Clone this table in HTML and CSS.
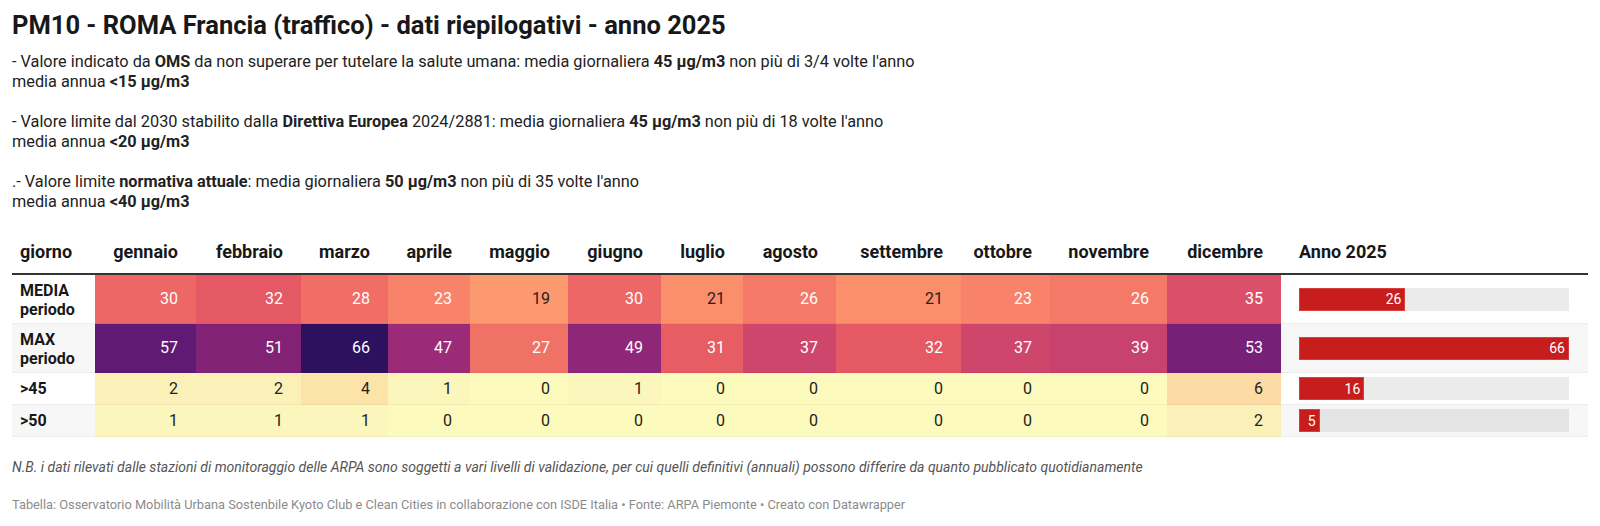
FILE: index.html
```html
<!DOCTYPE html>
<html lang="it">
<head>
<meta charset="utf-8">
<title>PM10 - ROMA Francia (traffico)</title>
<link rel="stylesheet" href="styles.css">
</head>
<body>
<div class="chart">
  <h1 class="title">PM10 - ROMA Francia (traffico) - dati riepilogativi - anno 2025</h1>
  <p class="desc">- Valore indicato da <b>OMS</b> da non superare per tutelare la salute umana: media giornaliera <b>45 µg/m3</b> non più di 3/4 volte l'anno<br>media annua <b>&lt;15 µg/m3</b><br><br>- Valore limite dal 2030 stabilito dalla <b>Direttiva Europea</b> 2024/2881: media giornaliera <b>45 µg/m3</b> non più di 18 volte l'anno<br>media annua <b>&lt;20 µg/m3</b><br><br>.- Valore limite <b>normativa attuale</b>: media giornaliera <b>50 µg/m3</b> non più di 35 volte l'anno<br>media annua <b>&lt;40 µg/m3</b></p>

  <table class="tbl">
    <colgroup>
      <col class="w-lab"><col class="w-gen"><col class="w-feb"><col class="w-mar"><col class="w-apr"><col class="w-mag"><col class="w-giu"><col class="w-lug"><col class="w-ago"><col class="w-set"><col class="w-ott"><col class="w-nov"><col class="w-dic"><col class="w-bar">
    </colgroup>
    <thead>
      <tr>
        <th class="lab">giorno</th>
        <th>gennaio</th><th>febbraio</th><th>marzo</th><th>aprile</th><th>maggio</th><th>giugno</th><th>luglio</th><th>agosto</th><th>settembre</th><th>ottobre</th><th>novembre</th><th>dicembre</th>
        <th class="barh">Anno 2025</th>
      </tr>
    </thead>
    <tbody>
      <tr class="two">
        <td class="lab">MEDIA<br>periodo</td>
        <td class="lt" style="background:#ec6766">30</td>
        <td class="lt" style="background:#e55964">32</td>
        <td class="lt" style="background:#f06e65">28</td>
        <td class="lt" style="background:#f8836a">23</td>
        <td class="dk" style="background:#fc996e">19</td>
        <td class="lt" style="background:#ec6766">30</td>
        <td class="dk" style="background:#fb8e6b">21</td>
        <td class="lt" style="background:#f47a67">26</td>
        <td class="dk" style="background:#fb8e6b">21</td>
        <td class="lt" style="background:#f8836a">23</td>
        <td class="lt" style="background:#f47a67">26</td>
        <td class="lt" style="background:#dc4f6a">35</td>
        <td class="barc"><div class="track"><div class="fill" style="width:39.4%"><span>26</span></div></div></td>
      </tr>
      <tr class="two alt">
        <td class="lab">MAX<br>periodo</td>
        <td class="lt" style="background:#5f1a73">57</td>
        <td class="lt" style="background:#822275">51</td>
        <td class="lt" style="background:#2d115f">66</td>
        <td class="lt" style="background:#9b2b78">47</td>
        <td class="lt" style="background:#f07266">27</td>
        <td class="lt" style="background:#8f2779">49</td>
        <td class="lt" style="background:#e65d64">31</td>
        <td class="lt" style="background:#cf466c">37</td>
        <td class="lt" style="background:#e45964">32</td>
        <td class="lt" style="background:#cf466c">37</td>
        <td class="lt" style="background:#c7426f">39</td>
        <td class="lt" style="background:#762078">53</td>
        <td class="barc"><div class="track"><div class="fill" style="width:100%"><span>66</span></div></div></td>
      </tr>
      <tr class="one">
        <td class="lab">&gt;45</td>
        <td class="dk" style="background:#fbf1b8">2</td>
        <td class="dk" style="background:#fbf1b8">2</td>
        <td class="dk" style="background:#fce4a8">4</td>
        <td class="dk" style="background:#fbf6bb">1</td>
        <td class="dk" style="background:#fcfabd">0</td>
        <td class="dk" style="background:#fbf6bb">1</td>
        <td class="dk" style="background:#fcfabd">0</td>
        <td class="dk" style="background:#fcfabd">0</td>
        <td class="dk" style="background:#fcfabd">0</td>
        <td class="dk" style="background:#fcfabd">0</td>
        <td class="dk" style="background:#fcfabd">0</td>
        <td class="dk" style="background:#fcdca4">6</td>
        <td class="barc"><div class="track"><div class="fill" style="width:24.2%"><span>16</span></div></div></td>
      </tr>
      <tr class="one alt">
        <td class="lab">&gt;50</td>
        <td class="dk" style="background:#fbf6bb">1</td>
        <td class="dk" style="background:#fbf6bb">1</td>
        <td class="dk" style="background:#fbf6bb">1</td>
        <td class="dk" style="background:#fcfabd">0</td>
        <td class="dk" style="background:#fcfabd">0</td>
        <td class="dk" style="background:#fcfabd">0</td>
        <td class="dk" style="background:#fcfabd">0</td>
        <td class="dk" style="background:#fcfabd">0</td>
        <td class="dk" style="background:#fcfabd">0</td>
        <td class="dk" style="background:#fcfabd">0</td>
        <td class="dk" style="background:#fcfabd">0</td>
        <td class="dk" style="background:#fbf1b8">2</td>
        <td class="barc"><div class="track"><div class="fill" style="width:7.6%"><span>5</span></div></div></td>
      </tr>
    </tbody>
  </table>

  <p class="note">N.B. i dati rilevati dalle stazioni di monitoraggio delle ARPA sono soggetti a vari livelli di validazione, per cui quelli definitivi (annuali) possono differire da quanto pubblicato quotidianamente</p>
  <p class="foot">Tabella: Osservatorio Mobilità Urbana Sostenbile Kyoto Club e Clean Cities in collaborazione con ISDE Italia • Fonte: ARPA Piemonte • Creato con Datawrapper</p>
</div>
</body>
</html>
```

FILE: styles.css
```css
html, body {
  margin: 0;
  padding: 0;
  background: #ffffff;
}

body {
  font-family: Roboto, "Liberation Sans", Arial, sans-serif;
  color: #181818;
}

.chart {
  padding: 10px 12px 0 12px;
}

.title {
  margin: 0;
  font-size: 25.5px;
  line-height: 30px;
  font-weight: 700;
  color: #181818;
}

.desc {
  margin: 12px 0 0 0;
  font-size: 16.3px;
  line-height: 20px;
  color: #222222;
}

.desc b {
  font-weight: 700;
}

.tbl {
  margin-top: 20px;
  width: 1576px;
  border-collapse: collapse;
  table-layout: fixed;
}

.w-lab { width: 83px; }
.w-gen { width: 101px; }
.w-feb { width: 105px; }
.w-mar { width: 87px; }
.w-apr { width: 82px; }
.w-mag { width: 98px; }
.w-giu { width: 93px; }
.w-lug { width: 82px; }
.w-ago { width: 93px; }
.w-set { width: 125px; }
.w-ott { width: 89px; }
.w-nov { width: 117px; }
.w-dic { width: 114px; }
.w-bar { width: 307px; }

.tbl th {
  font-size: 18px;
  font-weight: 700;
  line-height: 22px;
  padding: 9px 18px 10px 0;
  text-align: right;
  border-bottom: 2px solid #333333;
  white-space: nowrap;
  color: #181818;
}

.tbl th.lab {
  text-align: left;
  padding-left: 8px;
}

.tbl th.barh {
  text-align: left;
  padding-left: 18px;
}

.tbl td {
  font-size: 16px;
  line-height: 18px;
  text-align: right;
  padding: 7px 18px 6px 0;
  border-bottom: 1px solid rgba(0, 0, 0, 0.04);
  vertical-align: middle;
}

.tbl tr.two td {
  padding-top: 6px;
  padding-bottom: 6px;
}

.tbl td.lab {
  text-align: left;
  padding-left: 8px;
  font-weight: 700;
  color: #181818;
  border-bottom: 1px solid #ececec;
}

.tbl tr.two td.lab {
  line-height: 19px;
  padding-top: 6px;
  padding-bottom: 4px;
}

.tbl tr.alt td.lab,
.tbl tr.alt td.barc {
  background: #f7f7f7;
}

.tbl td.lt {
  color: #ffffff;
}

.tbl td.dk {
  color: #222222;
}

.tbl td.barc {
  padding: 0 19px 0 18px;
  border-bottom: 1px solid #ececec;
}

.track {
  height: 23px;
  background: #ebebeb;
}

.tbl tr.alt .track {
  background: #e4e4e4;
}

.fill {
  height: 23px;
  background: #c71e1d;
  box-shadow: inset 0 0 0 1px #d8403f;
  display: flex;
  align-items: center;
  justify-content: flex-end;
  box-sizing: border-box;
  padding-right: 4px;
}

.fill span {
  font-size: 14px;
  line-height: 16px;
  color: #ffffff;
}

.note {
  margin: 20px 0 0 0;
  font-size: 14px;
  line-height: 20px;
  font-style: italic;
  color: #555555;
}

.foot {
  margin: 18px 0 0 0;
  font-size: 12.8px;
  line-height: 20px;
  color: #8c8c8c;
}
```
